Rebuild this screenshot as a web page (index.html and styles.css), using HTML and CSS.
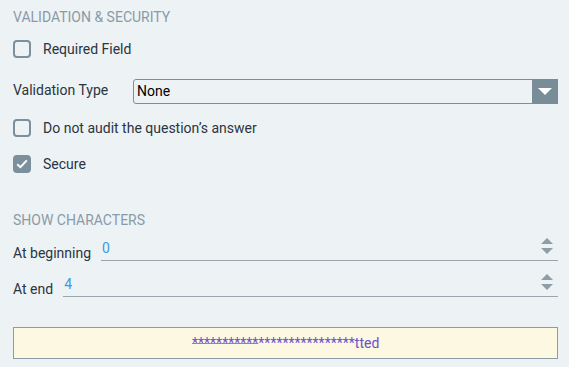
FILE: index.html
```html
<!DOCTYPE html>
<html>
<head>
<meta charset="utf-8">
<link rel="stylesheet" href="styles.css">
</head>
<body>
<div class="panel">
  <h2 class="section-title first">VALIDATION &amp; SECURITY</h2>

  <label class="check-row row-required">
    <span class="box"></span>
    <span class="check-label">Required Field</span>
  </label>

  <div class="select-row">
    <span class="field-label">Validation Type</span>
    <div class="select">
      <span class="select-value">None</span>
      <span class="select-btn">
        <svg width="14" height="7" viewBox="0 0 14 7"><path d="M0 0 H14 L7 7 Z" fill="#ffffff"/></svg>
      </span>
    </div>
  </div>

  <label class="check-row row-audit">
    <span class="box"></span>
    <span class="check-label">Do not audit the question’s answer</span>
  </label>

  <label class="check-row">
    <span class="box checked">
      <svg width="12" height="10" viewBox="0 0 12 10"><path d="M1.2 5.2 L4.4 8.2 L10.8 1.4" fill="none" stroke="#ffffff" stroke-width="2"/></svg>
    </span>
    <span class="check-label">Secure</span>
  </label>

  <h2 class="section-title second">SHOW CHARACTERS</h2>

  <div class="num-row first-num">
    <span class="num-label">At beginning</span>
    <div class="num-input">
      <span class="num-value">0</span>
      <span class="spinner">
        <svg width="12" height="16" viewBox="0 0 12 16"><path d="M0 6 L6 0 L12 6 Z" fill="#8d9ea9"/><path d="M0 10 H12 L6 16 Z" fill="#8d9ea9"/></svg>
      </span>
    </div>
  </div>

  <div class="num-row second-num">
    <span class="num-label">At end</span>
    <div class="num-input">
      <span class="num-value">4</span>
      <span class="spinner">
        <svg width="12" height="16" viewBox="0 0 12 16"><path d="M0 6 L6 0 L12 6 Z" fill="#8d9ea9"/><path d="M0 10 H12 L6 16 Z" fill="#8d9ea9"/></svg>
      </span>
    </div>
  </div>

  <div class="preview"><span class="struck">***********</span>****************tted</div>
</div>
</body>
</html>
```

FILE: styles.css
```css
html, body {
  margin: 0;
  padding: 0;
  background: #edf2f5;
}

body {
  font-family: Roboto, "Liberation Sans", sans-serif;
  font-size: 14px;
  color: #2b3440;
}

.panel {
  width: 545px;
  padding: 0 11px 0 13px;
  display: flex;
  flex-direction: column;
}

.section-title {
  margin: 0;
  font-size: 14px;
  font-weight: 400;
  line-height: 16px;
  color: #8a9aa7;
  letter-spacing: 0;
}

.section-title.first {
  padding-top: 9px;
}

.section-title.second {
  margin-top: 30px;
}

.check-row {
  display: flex;
  align-items: center;
  height: 36px;
  gap: 12px;
}

.row-required {
  margin-top: 6px;
}

.row-audit {
  margin-top: 7px;
}

.box {
  box-sizing: border-box;
  width: 18px;
  height: 18px;
  border: 2px solid #7b8f9c;
  border-radius: 4px;
  display: flex;
  align-items: center;
  justify-content: center;
  flex: none;
}

.box.checked {
  background: #7b8f9c;
}

.check-label {
  line-height: 16px;
}

.select-row {
  display: flex;
  align-items: center;
  margin-top: 12px;
  height: 24px;
}

.field-label {
  width: 120px;
  flex: none;
  line-height: 16px;
  margin-top: -3px;
}

.select {
  flex: 1;
  box-sizing: border-box;
  height: 25px;
  border: 1px solid #7d8e98;
  border-radius: 3px 0 0 3px;
  display: flex;
  align-items: center;
}

.select-value {
  flex: 1;
  padding-left: 3px;
  color: #000000;
  line-height: 16px;
}

.select-btn {
  width: 26px;
  height: 25px;
  margin: -1px -1px -1px 0;
  background: #798d99;
  display: flex;
  align-items: center;
  justify-content: center;
}

.num-row {
  display: flex;
  align-items: flex-end;
  height: 24px;
}

.first-num {
  margin-top: 9px;
}

.second-num {
  margin-top: 12px;
}

.num-label {
  line-height: 16px;
  padding-right: 10px;
  flex: none;
}

.num-input {
  flex: 1;
  height: 23px;
  border-bottom: 1px solid #9aa5ad;
  display: flex;
  align-items: center;
  padding-left: 1px;
}

.num-value {
  flex: 1;
  color: #3c9be0;
  font-size: 14px;
  line-height: 16px;
  margin-top: 3px;
  align-self: flex-start;
}

.spinner {
  width: 12px;
  height: 16px;
  margin-right: 5px;
  margin-top: -5px;
  display: flex;
}

.preview {
  margin-top: 30px;
  box-sizing: border-box;
  height: 32px;
  border: 1px solid #8b9ba7;
  background: #fdf8e1;
  color: #6b4fcc;
  font-size: 14px;
  line-height: 30px;
  padding-left: 178px;
  white-space: nowrap;
}

.struck {
  text-decoration: line-through;
  text-decoration-color: #8f7ae0;
  text-decoration-thickness: 1px;
}
```
